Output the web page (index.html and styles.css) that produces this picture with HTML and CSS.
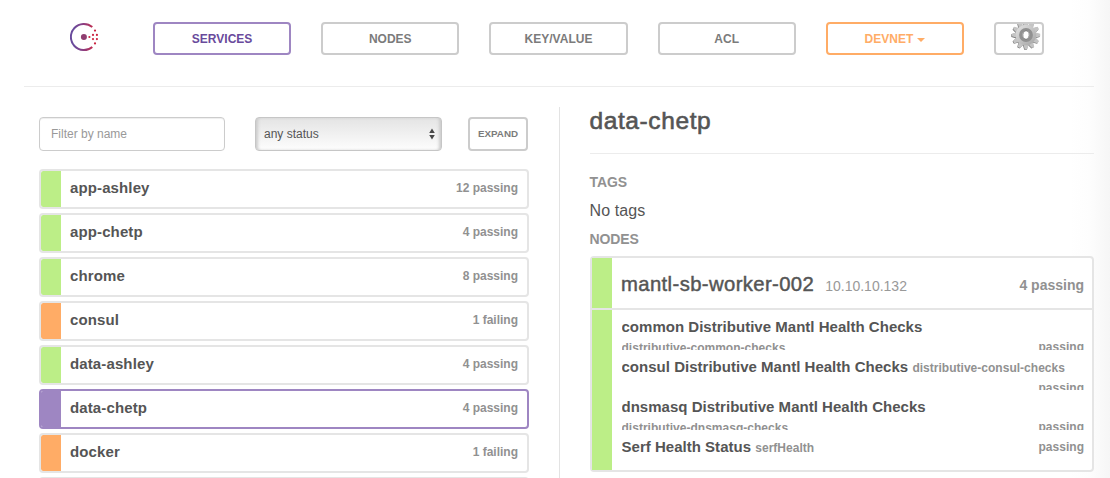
FILE: index.html
```html
<!DOCTYPE html>
<html lang="en">
<head>
<meta charset="utf-8">
<title>Consul</title>
<link rel="stylesheet" href="styles.css">
</head>
<body>
<div class="page">
  <header class="topbar">
    <svg class="logo" width="30" height="30" viewBox="0 0 30 30">
      <defs>
        <linearGradient id="ring" gradientUnits="userSpaceOnUse" x1="4" y1="0" x2="24" y2="0">
          <stop offset="0" stop-color="#694a9c"/><stop offset=".45" stop-color="#8a3f83"/><stop offset="1" stop-color="#c62a48"/>
        </linearGradient>
      </defs>
      <path d="M22.3 5.1A13 13 0 1 0 22.3 24.9" fill="none" stroke="url(#ring)" stroke-width="2"/>
      <circle cx="13.9" cy="15" r="3" fill="#8f3e70"/>
      <g fill="#cc2440">
        <circle cx="19.4" cy="15" r="1.1"/>
        <circle cx="23" cy="12.9" r="1.1"/><circle cx="23" cy="17.1" r="1.1"/>
        <circle cx="26.9" cy="12.9" r="1.1"/><circle cx="26.9" cy="17.1" r="1.1"/>
        <circle cx="25" cy="8.6" r="1.1"/><circle cx="25" cy="21.4" r="1.1"/>
      </g>
    </svg>
    <nav class="nav">
      <a class="btn active">SERVICES</a>
      <a class="btn">NODES</a>
      <a class="btn">KEY/VALUE</a>
      <a class="btn">ACL</a>
      <a class="btn warning">DEVNET<span class="caret"></span></a>
    </nav>
    <a class="btn settings">
      <svg class="gear" width="30" height="30" viewBox="-15 -15 30 30">
        <defs>
          <linearGradient id="metal" gradientUnits="userSpaceOnUse" x1="-9" y1="-10" x2="9" y2="10">
            <stop offset="0" stop-color="#e2e2e2"/><stop offset="1" stop-color="#a6a6a6"/>
          </linearGradient>
          <path id="tooth" d="M-2.8-9L-1.3-14.2H1.3L2.8-9Z"/>
          <g id="teeth">
            <use href="#tooth"/><use href="#tooth" transform="rotate(30)"/><use href="#tooth" transform="rotate(60)"/>
            <use href="#tooth" transform="rotate(90)"/><use href="#tooth" transform="rotate(120)"/><use href="#tooth" transform="rotate(150)"/>
            <use href="#tooth" transform="rotate(180)"/><use href="#tooth" transform="rotate(210)"/><use href="#tooth" transform="rotate(240)"/>
            <use href="#tooth" transform="rotate(270)"/><use href="#tooth" transform="rotate(300)"/><use href="#tooth" transform="rotate(330)"/>
          </g>
        </defs>
        <use href="#teeth" x="-.5" y=".6" fill="#777"/>
        <use href="#teeth" fill="#c4c4c4"/>
        <circle r="10.3" fill="url(#metal)"/>
        <circle r="5.3" fill="none" stroke="#919191" stroke-width="3.2"/>
        <ellipse rx="3.1" ry="4.1" fill="#fff" stroke="#747474" stroke-width=".6" transform="rotate(12)"/>
      </svg>
    </a>
  </header>

  <main class="columns">
    <section class="services">
      <div class="filters">
        <input class="field" type="text" placeholder="Filter by name">
        <div class="select">any status
          <svg width="6" height="12" viewBox="0 0 6 12"><path d="M3 .5L5.8 5H.2ZM3 11.5L5.8 7H.2Z" fill="#484848"/></svg>
        </div>
        <button class="btn expand">EXPAND</button>
      </div>
      <div class="list">
        <div class="item passing"><b class="name">app-ashley</b><span class="count">12 passing</span></div>
        <div class="item passing"><b class="name">app-chetp</b><span class="count">4 passing</span></div>
        <div class="item passing"><b class="name">chrome</b><span class="count">8 passing</span></div>
        <div class="item failing"><b class="name">consul</b><span class="count">1 failing</span></div>
        <div class="item passing"><b class="name">data-ashley</b><span class="count">4 passing</span></div>
        <div class="item selected"><b class="name">data-chetp</b><span class="count">4 passing</span></div>
        <div class="item failing"><b class="name">docker</b><span class="count">1 failing</span></div>
        <div class="item passing"></div>
      </div>
    </section>

    <section class="detail">
      <h1 class="title">data-chetp</h1>
      <h2 class="label">TAGS</h2>
      <p class="tags">No tags</p>
      <h2 class="label">NODES</h2>
      <div class="panel">
        <div class="panel-head">
          <span class="node">mantl-sb-worker-002</span>
          <span class="ip">10.10.10.132</span>
          <span class="total">4 passing</span>
        </div>
        <div class="checks">
          <div class="check"><b>common Distributive Mantl Health Checks</b> <small>distributive-common-checks</small> <small class="state">passing</small></div>
          <div class="check"><b>consul Distributive Mantl Health Checks</b> <small>distributive-consul-checks</small> <small class="state">passing</small></div>
          <div class="check"><b>dnsmasq Distributive Mantl Health Checks</b> <small>distributive-dnsmasq-checks</small> <small class="state">passing</small></div>
          <div class="check"><b>Serf Health Status</b> <small>serfHealth</small> <small class="state">passing</small></div>
        </div>
      </div>
    </section>
  </main>
</div>
</body>
</html>
```
FILE: styles.css
```css
* { box-sizing: border-box; }
body {
  margin: 0;
  height: 478px;
  overflow: hidden;
  font-family: "Liberation Sans", Arial, sans-serif;
  color: #555;
  background: linear-gradient(to right, #fff 1070px, #fdfdfd 1090px, #f6f6f6 1110px);
}
.page { width: 1070px; height: 478px; margin-left: 24px; display: flex; flex-direction: column; overflow: hidden; }

.topbar {
  height: 87px;
  flex: none;
  display: flex;
  align-items: flex-start;
  padding: 22px 50px 0 46px;
  border-bottom: 1px solid #ececec;
}
.logo { flex: none; margin-right: 53px; }
.nav { flex: none; width: 811px; display: grid; grid-template-columns: repeat(5, 1fr); gap: 30px; }
.btn {
  height: 33px;
  border: 2px solid #ccc;
  border-radius: 4px;
  background: #fff;
  color: #7b7b7b;
  font-size: 12px;
  font-weight: bold;
  line-height: 30px;
  text-align: center;
}
.btn.active { border-color: #9e86c2; color: #694a9c; }
.btn.warning { border-color: #ffac66; color: #ffac66; }
.caret {
  display: inline-block;
  margin-left: 4px;
  vertical-align: 1px;
  border: 4px solid transparent;
  border-top-color: #ffac66;
  border-bottom: 0;
}
.settings { flex: none; width: 50px; margin-left: 30px; overflow: hidden; display: flex; justify-content: flex-end; }
.gear { flex: none; margin: -4px 1px 0 0; }

.columns { flex: 1; min-height: 0; display: flex; padding-top: 20px; }
.services { width: 536px; flex: none; padding: 10px 30px 0 15px; border-right: 1px solid #e3e3e3; overflow: hidden; }
.filters { display: flex; height: 34px; margin-bottom: 18px; }
.field {
  width: 186px;
  height: 34px;
  margin: 0 30px 0 0;
  padding: 0 11px;
  border: 1px solid #ccc;
  border-radius: 4px;
  box-shadow: inset 0 1px 1px rgba(0, 0, 0, .07);
  font: 12px "Liberation Sans", Arial, sans-serif;
}
.field::placeholder { color: #999; }
.select {
  width: 187px;
  margin-right: 26px;
  padding: 0 6px 0 8px;
  display: flex;
  align-items: center;
  justify-content: space-between;
  border: 1px solid #c6c6c6;
  border-radius: 4px;
  background: linear-gradient(#e4e4e4, #fdfdfd);
  box-shadow: inset 3px 0 3px -1px #ccc, inset -3px 0 3px -1px #ccc;
  font-size: 12px;
}
.expand { width: 60px; height: 34px; padding: 0; font-family: inherit; font-size: 9.8px; line-height: 30px; }

.item {
  height: 40px;
  margin-bottom: 4px;
  padding: 0 9px;
  display: flex;
  justify-content: space-between;
  border: 2px solid #e5e5e5;
  border-radius: 4px;
  background: #fff;
  line-height: 34px;
}
.passing { background: linear-gradient(to right, #bcee87 20px, #fff 20px) padding-box; }
.failing { background: linear-gradient(to right, #ffac66 20px, #fff 20px) padding-box; }
.selected { border-color: #9e86c2; background: linear-gradient(to right, #9e86c2 20px, #fff 20px) padding-box; }
.name { padding-left: 20px; font-size: 15px; letter-spacing: .12px; }
.count { font-size: 12px; font-weight: bold; color: #919191; }

.detail { flex: 1; padding-left: 29.5px; }
.title {
  height: 47px;
  margin: 0 0 18px;
  border-bottom: 1px solid #ececec;
  font-size: 24.5px;
  font-weight: normal;
  line-height: 28px;
  letter-spacing: .6px;
  -webkit-text-stroke: .6px #555;
}
.label { margin: 0; font-size: 14px; line-height: 20px; letter-spacing: -.1px; color: #919191; }
.tags { margin: 6px 0; font-size: 16px; line-height: 25px; letter-spacing: .1px; }
.panel { width: 504px; height: 216px; margin: 7px 0 0 .5px; border: 2px solid #e5e5e5; border-radius: 4px; background: #fff; }
.panel-head {
  height: 52px;
  padding: 0 8px 0 29px;
  display: flex;
  align-items: baseline;
  line-height: 53px;
  border-bottom: 2px solid #e5e5e5;
  background: linear-gradient(to right, #bcee87 20px, transparent 20px) padding-box;
}
.node { font-size: 20.3px; letter-spacing: .38px; -webkit-text-stroke: .45px #555; }
.ip { margin-left: 11px; font-size: 14px; color: #999; }
.total { align-self: flex-start; margin-left: auto; font-size: 14px; line-height: 54px; font-weight: bold; color: #919191; }
.checks { height: 160px; padding: 0 8px 0 29.5px; background: linear-gradient(to right, #bcee87 20px, transparent 20px); }
.check { height: 40px; padding-top: 7px; overflow: hidden; line-height: 20px; font-size: 15px; letter-spacing: .02px; }
.check small { font-size: 12px; font-weight: bold; color: #919191; white-space: nowrap; }
.check .state { float: right; }
```
